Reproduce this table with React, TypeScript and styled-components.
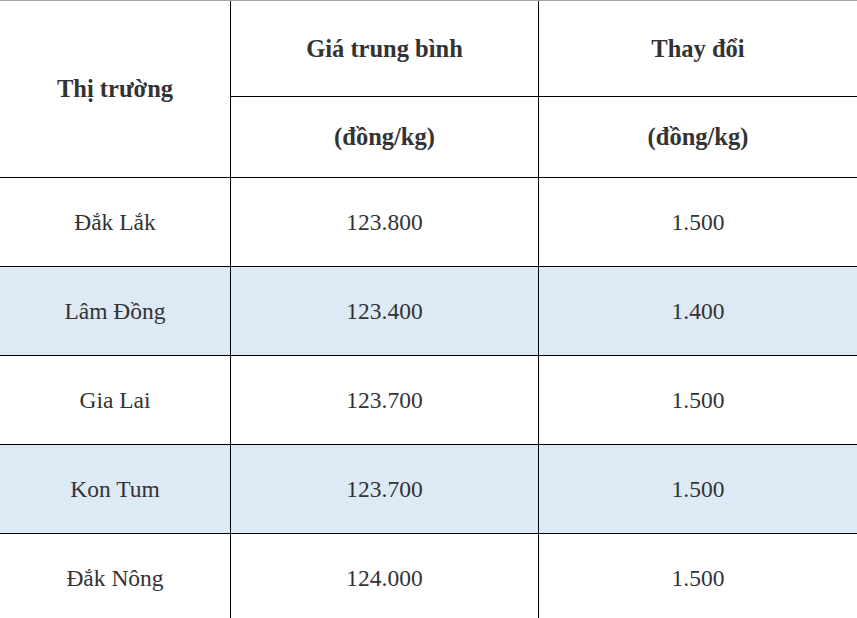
import styled, { createGlobalStyle } from 'styled-components'

const GlobalStyle = createGlobalStyle`
  html, body {
    margin: 0;
    padding: 0;
    background: #fff;
  }
  body {
    font-family: "Liberation Serif", "Times New Roman", serif;
    color: #333;
  }
`

const PriceTable = styled.div`
  display: grid;
  grid-template-columns: 231px 308px 318px;
  grid-template-rows: 96px 81px;
  grid-auto-rows: 89px;
  width: 857px;
  border-top: 1px solid #a6a6a6;
`

const Cell = styled.div<{ $head?: boolean; $last?: boolean; $shaded?: boolean; $span?: boolean }>`
  box-sizing: border-box;
  display: flex;
  align-items: center;
  justify-content: center;
  text-align: center;
  font-size: ${({ $head }) => ($head ? '24.5px' : '23.5px')};
  font-weight: ${({ $head }) => ($head ? 700 : 400)};
  background: ${({ $shaded }) => ($shaded ? '#dde9f5' : '#fff')};
  border-bottom: 1px solid #000;
  border-right: ${({ $last }) => ($last ? 'none' : '1px solid #000')};
  grid-row: ${({ $span }) => ($span ? 'span 2' : 'auto')};
`

const rows = [
  { market: 'Đắk Lắk', price: '123.800', change: '1.500' },
  { market: 'Lâm Đồng', price: '123.400', change: '1.400' },
  { market: 'Gia Lai', price: '123.700', change: '1.500' },
  { market: 'Kon Tum', price: '123.700', change: '1.500' },
  { market: 'Đắk Nông', price: '124.000', change: '1.500' },
]

export default function App() {
  return (
    <>
      <GlobalStyle />
      <PriceTable>
        <Cell $head $span>Thị trường</Cell>
        <Cell $head>Giá trung bình</Cell>
        <Cell $head $last>Thay đổi</Cell>
        <Cell $head>(đồng/kg)</Cell>
        <Cell $head $last>(đồng/kg)</Cell>
        {rows.map((r, i) => (
          <>
            <Cell key={r.market + 'm'} $shaded={i % 2 === 1}>{r.market}</Cell>
            <Cell key={r.market + 'p'} $shaded={i % 2 === 1}>{r.price}</Cell>
            <Cell key={r.market + 'c'} $shaded={i % 2 === 1} $last>{r.change}</Cell>
          </>
        ))}
      </PriceTable>
    </>
  )
}
